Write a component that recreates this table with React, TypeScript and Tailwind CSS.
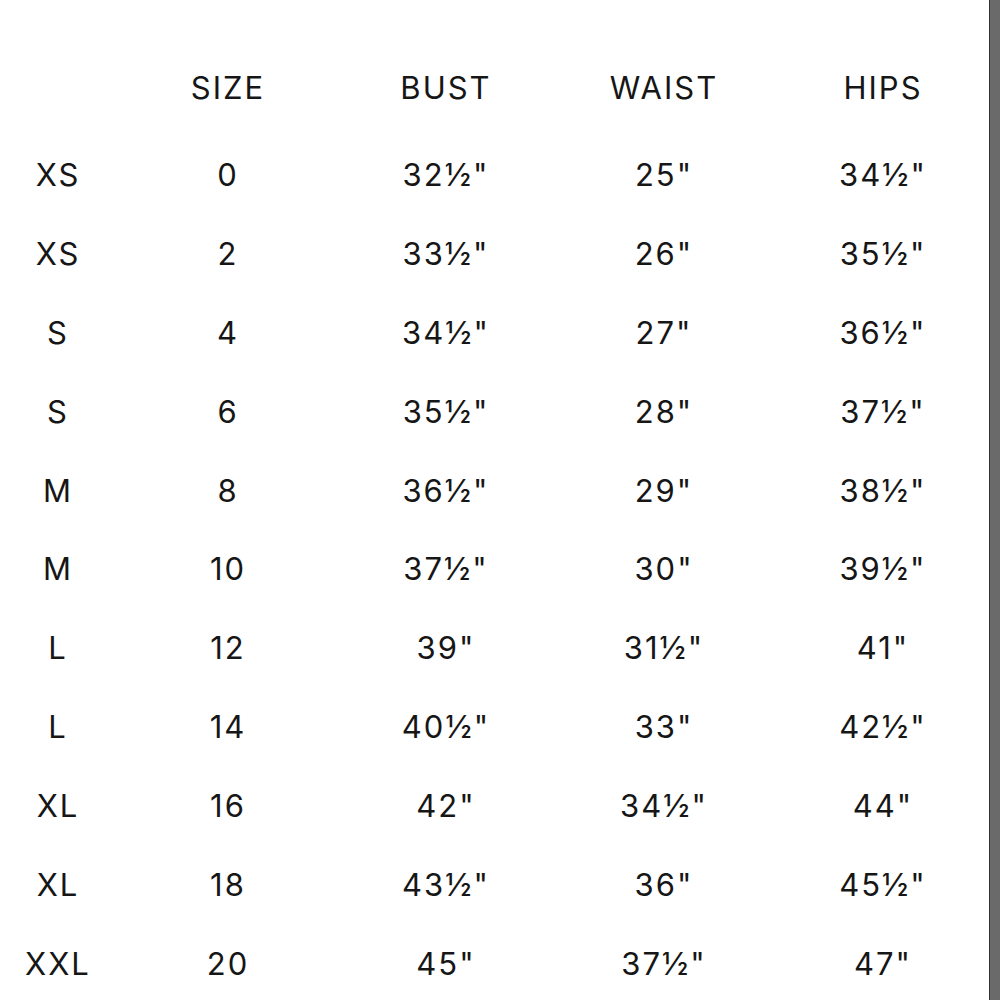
const header = ["", "SIZE", "BUST", "WAIST", "HIPS"];

const rows: string[][] = [
  ["XS", "0", "32½\"", "25\"", "34½\""],
  ["XS", "2", "33½\"", "26\"", "35½\""],
  ["S", "4", "34½\"", "27\"", "36½\""],
  ["S", "6", "35½\"", "28\"", "37½\""],
  ["M", "8", "36½\"", "29\"", "38½\""],
  ["M", "10", "37½\"", "30\"", "39½\""],
  ["L", "12", "39\"", "31½\"", "41\""],
  ["L", "14", "40½\"", "33\"", "42½\""],
  ["XL", "16", "42\"", "34½\"", "44\""],
  ["XL", "18", "43½\"", "36\"", "45½\""],
  ["XXL", "20", "45\"", "37½\"", "47\""],
];

const grid = "grid grid-cols-[114px_226px_210px_226px_212px]";

export default function App() {
  return (
    <div className="flex h-[1000px] w-[1000px] overflow-hidden bg-white">
      <div className="flex h-full w-[989px] flex-col">
        <div
          className="flex-1 pt-[39px] text-[31px] font-normal tracking-[2px] text-[#161616]"
          style={{ fontFamily: "Inter, Lato, sans-serif" }}
        >
          {/* Column titles */}
          <div className={`${grid} h-[96px] items-center`}>
            {header.map((h, i) => (
              <div key={i} className="pl-[2px] text-center leading-none">
                {h}
              </div>
            ))}
          </div>

          {/* Size rows */}
          {rows.map((r, ri) => (
            <div key={ri} className={`${grid} h-[78.9px] items-center`}>
              {r.map((c, ci) => (
                <div key={ci} className="pl-[2px] text-center leading-none">
                  {c}
                </div>
              ))}
            </div>
          ))}
        </div>
        <div className="h-[2px] bg-[#2a2a2a]" />
        <div className="h-[2px] bg-white" />
      </div>
      <div className="h-full w-px bg-[#333]" />
      <div className="h-full flex-1 bg-[#6a6a6a]" />
    </div>
  );
}
